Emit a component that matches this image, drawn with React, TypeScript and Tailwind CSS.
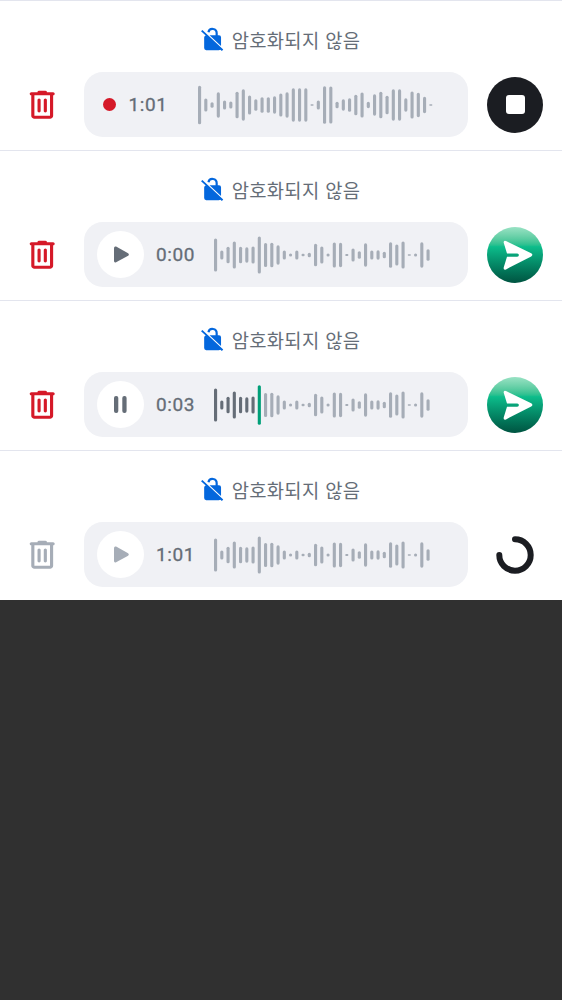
type PlayerState = 'recording' | 'ready' | 'playing' | 'sending';

const RECORDING_LEVELS = [
  38.7, 13, 5.7, 25.3, 9, 7, 26.7, 31.3, 19, 11.7, 15.7, 15.7, 17.3, 23, 25.3, 33.3, 33.3, 33.3, 1.3, 9, 37.7, 37, 6.7,
  11.3, 13.7, 20.7, 25, 6.3, 21.3, 26.7, 18.7, 31.3, 31.3, 13.3, 27, 24.3, 16.3, 1.3,
];

const PLAYBACK_LEVELS = [
  33, 9, 16.7, 27, 16.7, 15.3, 17, 37, 24, 24.7, 19.3, 9, 3, 9, 2.5, 4.7, 22.7, 17, 3, 25, 24.3, 1.8, 13, 7.5, 23.3, 9,
  9.3, 6.5, 25.5, 21, 27, 1.3, 3, 25.3, 11.7,
];

function Waveform({ levels, cursor = -1 }: { levels: number[]; cursor?: number }) {
  return (
    <svg width={levels.length * 6.25} height="40" className="shrink-0 overflow-visible">
      {levels.map((level, i) => {
        const h = i === cursor ? 39.5 : level;
        return (
          <rect
            key={i}
            x={i * 6.25}
            y={20 - h / 2}
            width="3.125"
            height={h}
            rx={Math.min(1.56, h / 2)}
            fill={i === cursor ? '#009f78' : i < cursor ? '#656d77' : '#a6adb7'}
          />
        );
      })}
    </svg>
  );
}

function LockOffIcon() {
  return (
    <svg viewBox="0 0 24 24" className="size-[25px] shrink-0 text-[#0467dd]" fill="currentColor">
      <path d="M8.1 5A4 4 0 0 1 16 6v3" fill="none" stroke="currentColor" strokeWidth="2.1" />
      <path d="M9.2 7.9H18.2a2 2 0 0 1 2 2v8.3z" />
      <path d="M1 4.1 2.3 2.8 22.3 21.7 21 23.1 19.6 21.8 18 22.2H6a2 2 0 0 1-2-2V10q0-1.6 1.5-1.9z" />
    </svg>
  );
}

function DeleteIcon() {
  return (
    <svg viewBox="-0.29 -0.61 24.32 24.32" className="size-[38px]" fill="currentColor">
      <path d="M7 21q-.824 0-1.412-.587A1.93 1.93 0 0 1 5 19V6a.97.97 0 0 1-.713-.287A.97.97 0 0 1 4 5q0-.424.287-.713A.97.97 0 0 1 5 4h4q0-.424.287-.712A.97.97 0 0 1 10 3h4q.424 0 .713.288Q15 3.575 15 4h4q.424 0 .712.287Q20 4.576 20 5t-.288.713A.97.97 0 0 1 19 6v13q0 .824-.587 1.413A1.93 1.93 0 0 1 17 21zM7 6v13h10V6zm2 10q0 .424.287.712Q9.576 17 10 17t.713-.288A.97.97 0 0 0 11 16V9a.97.97 0 0 0-.287-.713A.97.97 0 0 0 10 8a.97.97 0 0 0-.713.287A.97.97 0 0 0 9 9zm4 0q0 .424.287.712.288.288.713.288.424 0 .713-.288A.97.97 0 0 0 15 16V9a.97.97 0 0 0-.287-.713A.97.97 0 0 0 14 8a.97.97 0 0 0-.713.287A.97.97 0 0 0 13 9z" />
    </svg>
  );
}

function PlayIcon() {
  return (
    <svg viewBox="0 0 47 47" className="size-[47px]" fill="currentColor">
      <path d="M17 17.3q0-2.5 2.1-1.7L31.1 22.2q1.5 1.3 0 2.6L19.1 31.3q-2.1.8-2.1-1.5z" />
    </svg>
  );
}

function PauseIcon() {
  return (
    <svg viewBox="0 0 47 47" className="size-[47px]" fill="currentColor">
      <rect x="17" y="15" width="4.3" height="17" rx="2" />
      <rect x="25.3" y="15" width="4.3" height="17" rx="2" />
    </svg>
  );
}

function SendIcon() {
  return (
    <svg viewBox="0 0 56 56" className="size-14" fill="currentColor">
      <path d="M16.7 15.8Q16.4 13 19 14L44.2 26.3Q46.6 27.9 44.2 29.4L19 42.4Q16.2 43.3 16.7 40.6L20 29.7H30.2Q31.9 29.5 31.9 28T30.2 26.4H20z" />
    </svg>
  );
}

function Action({ state }: { state: PlayerState }) {
  if (state === 'recording')
    return (
      <button className="flex size-[56.25px] items-center justify-center rounded-full bg-[#1b1d22]">
        <span className="size-[19px] rounded-[3px] bg-white" />
      </button>
    );
  if (state === 'sending')
    return (
      <div className="flex size-[56.25px] items-center justify-center">
        <svg viewBox="0 0 38 38" className="size-[38px]">
          <path d="M19 3.3A15.7 15.7 0 1 1 3.3 19" fill="none" stroke="#1b1d22" strokeWidth="6" strokeLinecap="round" />
        </svg>
      </div>
    );
  return (
    <button className="flex size-[56.25px] items-center justify-center rounded-full bg-linear-to-b from-[#99e2c4] via-[#0dbd8b] via-35% to-[#005441] text-white">
      <SendIcon />
    </button>
  );
}

function Composer({ state, time }: { state: PlayerState; time: string }) {
  const recording = state === 'recording';
  const sending = state === 'sending';
  return (
    <section className="h-[150px] border-t border-[#e3e5ee] bg-white">
      <div className="flex h-[71px] items-center justify-center pr-[2px] pt-[6px]">
        <LockOffIcon />
        <span className="pl-[7px] pt-[4px] text-[18.75px] leading-7 tracking-[0.3px] text-[#656d77] [word-spacing:0.8px]">
          암호화되지 않음
        </span>
      </div>
      <div className="flex h-[65px] items-center pr-[18.75px]">
        <button className={`flex w-[84px] justify-center pb-px ${sending ? 'text-[#a6adb7]' : 'text-[#d51928]'}`}>
          <DeleteIcon />
        </button>
        <div
          className={`flex h-[65px] w-[384px] items-center rounded-[18.75px] bg-[#f0f1f5] ${recording ? 'pl-[19px]' : 'pl-[13px]'}`}
        >
          {recording ? (
            <span className="size-[12.5px] shrink-0 rounded-full bg-[#d51928]" />
          ) : (
            <button
              className={`flex size-[47px] shrink-0 items-center justify-center rounded-full bg-white ${sending ? 'text-[#a6adb7]' : 'text-[#656d77]'}`}
            >
              {state === 'playing' ? <PauseIcon /> : <PlayIcon />}
            </button>
          )}
          <span
            className={`shrink-0 text-[19px] leading-7 tracking-[0.6px] text-[#656d77] [-webkit-text-stroke:0.3px] ${recording ? 'ml-[13px] w-[69.5px]' : 'ml-3 w-[57.8px]'}`}
          >
            {time}
          </span>
          <Waveform levels={recording ? RECORDING_LEVELS : PLAYBACK_LEVELS} cursor={state === 'playing' ? 7 : -1} />
        </div>
        <div className="ml-auto pt-[0.8px]">
          <Action state={state} />
        </div>
      </div>
    </section>
  );
}

export default function App() {
  return (
    <main className="min-h-screen w-full bg-[#303030] font-['Roboto','Noto_Sans_CJK_KR',sans-serif]">
      <Composer state="recording" time="1:01" />
      <Composer state="ready" time="0:00" />
      <Composer state="playing" time="0:03" />
      <Composer state="sending" time="1:01" />
    </main>
  );
}
